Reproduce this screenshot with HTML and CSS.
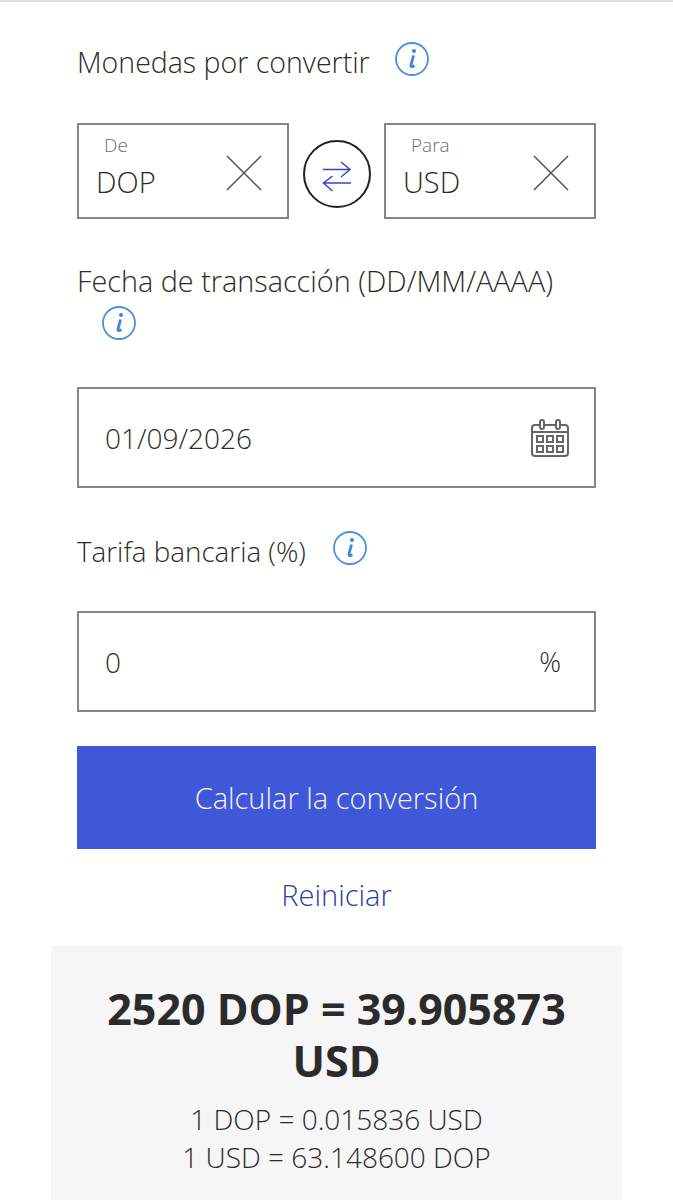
FILE: index.html
```html
<!DOCTYPE html>
<html lang="es">

<head>
  <meta charset="UTF-8">
  <meta name="viewport" content="width=device-width, initial-scale=1.0">
  <title>Conversor de monedas</title>
  <link rel="stylesheet" href="styles.css">
</head>

<body>
  <form class="converter" action="#">
    <div class="label-row label-currencies">
      <span>Monedas por convertir</span>
      <svg class="info" viewBox="0 0 34 34"><use href="#icon-info"></use></svg>
    </div>

    <div class="currencies">
      <div class="currency">
        <div class="currency-text">
          <span class="small-label">De</span>
          <span class="code">DOP</span>
        </div>
        <svg class="clear" viewBox="0 0 36 36"><path d="M1 1 35 35M35 1 1 35"></path></svg>
      </div>
      <button class="swap" type="button" aria-label="Invertir">
        <svg viewBox="0 0 30 36">
          <path class="arrow" d="M1 13.500H28M19 6 28 13.500 19 21M29 27H1.500M10.500 20 1.500 27 10.500 35"></path>
        </svg>
      </button>
      <div class="currency">
        <div class="currency-text">
          <span class="small-label">Para</span>
          <span class="code">USD</span>
        </div>
        <svg class="clear" viewBox="0 0 36 36"><path d="M1 1 35 35M35 1 1 35"></path></svg>
      </div>
    </div>

    <div class="label-row label-date">
      <span>Fecha de transacción (DD/MM/AAAA)</span>
      <svg class="info info-wrapped" viewBox="0 0 34 34"><use href="#icon-info"></use></svg>
    </div>

    <div class="field field-date">
      <span>01/09/2026</span>
      <svg class="calendar" viewBox="0 0 38 38">
        <rect x="1" y="6" width="36" height="31" rx="3"></rect>
        <path d="M1 13H37"></path>
        <rect class="ring" x="9" y="1" width="4" height="9" rx="2"></rect>
        <rect class="ring" x="25" y="1" width="4" height="9" rx="2"></rect>
        <rect x="6" y="17" width="6" height="6"></rect>
        <rect x="16" y="17" width="6" height="6"></rect>
        <rect x="26" y="17" width="6" height="6"></rect>
        <rect x="6" y="27" width="6" height="6"></rect>
        <rect x="16" y="27" width="6" height="6"></rect>
        <rect x="26" y="27" width="6" height="6"></rect>
      </svg>
    </div>

    <div class="label-row label-fee">
      <span>Tarifa bancaria (%)</span>
      <svg class="info" viewBox="0 0 34 34"><use href="#icon-info"></use></svg>
    </div>

    <div class="field field-fee">
      <span>0</span>
      <span class="percent">%</span>
    </div>

    <button class="submit" type="button">Calcular la conversión</button>
    <a class="reset" href="#">Reiniciar</a>
  </form>

  <section class="result">
    <h2>2520 DOP = 39.905873 USD</h2>
    <p>1 DOP = 0.015836 USD</p>
    <p>1 USD = 63.148600 DOP</p>
  </section>

  <svg class="defs" width="0" height="0">
    <symbol id="icon-info" viewBox="0 0 34 34">
      <circle cx="17" cy="17" r="16" fill="none" stroke="#4a8fe0" stroke-width="1.800"></circle>
      <circle cx="19" cy="9" r="2" fill="#3f86de"></circle>
      <path d="M18.500 13.500 16 23Q15.500 25.800 19.500 23.800" fill="none" stroke="#3f86de" stroke-width="2.800"></path>
    </symbol>
  </svg>
</body>

</html>
```

FILE: styles.css
```css
* {
  box-sizing: border-box;
  margin: 0;
  padding: 0;
}

body {
  border-top: 2px solid #dcdbe6;
  background: #fffffe;
  color: #2b2b2b;
  font-family: "Open Sans", "Noto Sans", sans-serif;
  font-weight: 300;
}

.converter {
  display: flex;
  flex-direction: column;
  padding: 0 77px;
}

.label-row {
  font-size: 28.500px;
  line-height: 40px;
}

.label-row .info {
  width: 34px;
  height: 34px;
  margin-left: 18px;
  vertical-align: -3px;
}

.label-currencies {
  margin-top: 40px;
}

.label-date {
  margin-top: 42px;
  font-size: 28.800px;
}

.label-date .info-wrapped {
  display: block;
  margin: 5px 0 0 25px;
}

.label-fee {
  margin-top: 43px;
  font-size: 27.800px;
}

.label-fee .info {
  margin-left: 20px;
}

.currencies {
  display: flex;
  align-items: center;
  justify-content: space-between;
  margin-top: 41px;
}

.currency {
  display: flex;
  align-items: center;
  justify-content: space-between;
  width: 212px;
  height: 96px;
  padding: 0 25px 0 17px;
  border: 2px solid #858585;
}

.currency-text {
  display: flex;
  flex-direction: column;
  padding-bottom: 12px;
}

.small-label {
  margin-left: 8px;
  color: #6e6e6e;
  font-size: 19px;
  line-height: 34px;
}

.code {
  font-size: 29px;
  line-height: 40px;
}

.clear {
  width: 36px;
  height: 36px;
  margin-top: 4px;
  fill: none;
  stroke: #555;
  stroke-width: 1.500;
}

.swap {
  display: flex;
  align-items: center;
  justify-content: center;
  width: 68px;
  height: 68px;
  margin-top: 6px;
  border: 2px solid #222;
  border-radius: 50%;
  background: transparent;
}

.swap svg {
  width: 30px;
  height: 36px;
}

.arrow {
  fill: none;
  stroke: #2f4bc4;
  stroke-width: 1.500;
}

.field {
  display: flex;
  align-items: center;
  justify-content: space-between;
  height: 101px;
  padding: 0 25px 0 26px;
  border: 2px solid #858585;
  font-size: 28px;
}

.field-date {
  margin-top: 47px;
}

.field-fee {
  margin-top: 40px;
}

.calendar {
  width: 38px;
  height: 38px;
  fill: none;
  stroke: #666;
  stroke-width: 2;
}

.calendar .ring {
  fill: #fff;
}

.percent {
  margin-right: 8px;
  font-size: 27px;
}

.submit {
  height: 103px;
  margin-top: 34px;
  border: none;
  background: #4058d8;
  color: #f2f3fb;
  font-family: inherit;
  font-size: 29px;
  font-weight: 300;
}

.reset {
  margin-top: 23px;
  color: #2a40ae;
  font-size: 29px;
  line-height: 46px;
  text-align: center;
  text-decoration: none;
}

.result {
  height: 254px;
  margin: 28px 51px 0;
  padding: 37px 40px 0;
  background: #f6f6f6;
  text-align: center;
}

.result h2 {
  margin-bottom: 13px;
  color: #2b2b2b;
  font-size: 43px;
  font-weight: 700;
  line-height: 52px;
}

.result p {
  font-size: 28px;
  line-height: 38px;
}

.defs {
  position: absolute;
}
```
